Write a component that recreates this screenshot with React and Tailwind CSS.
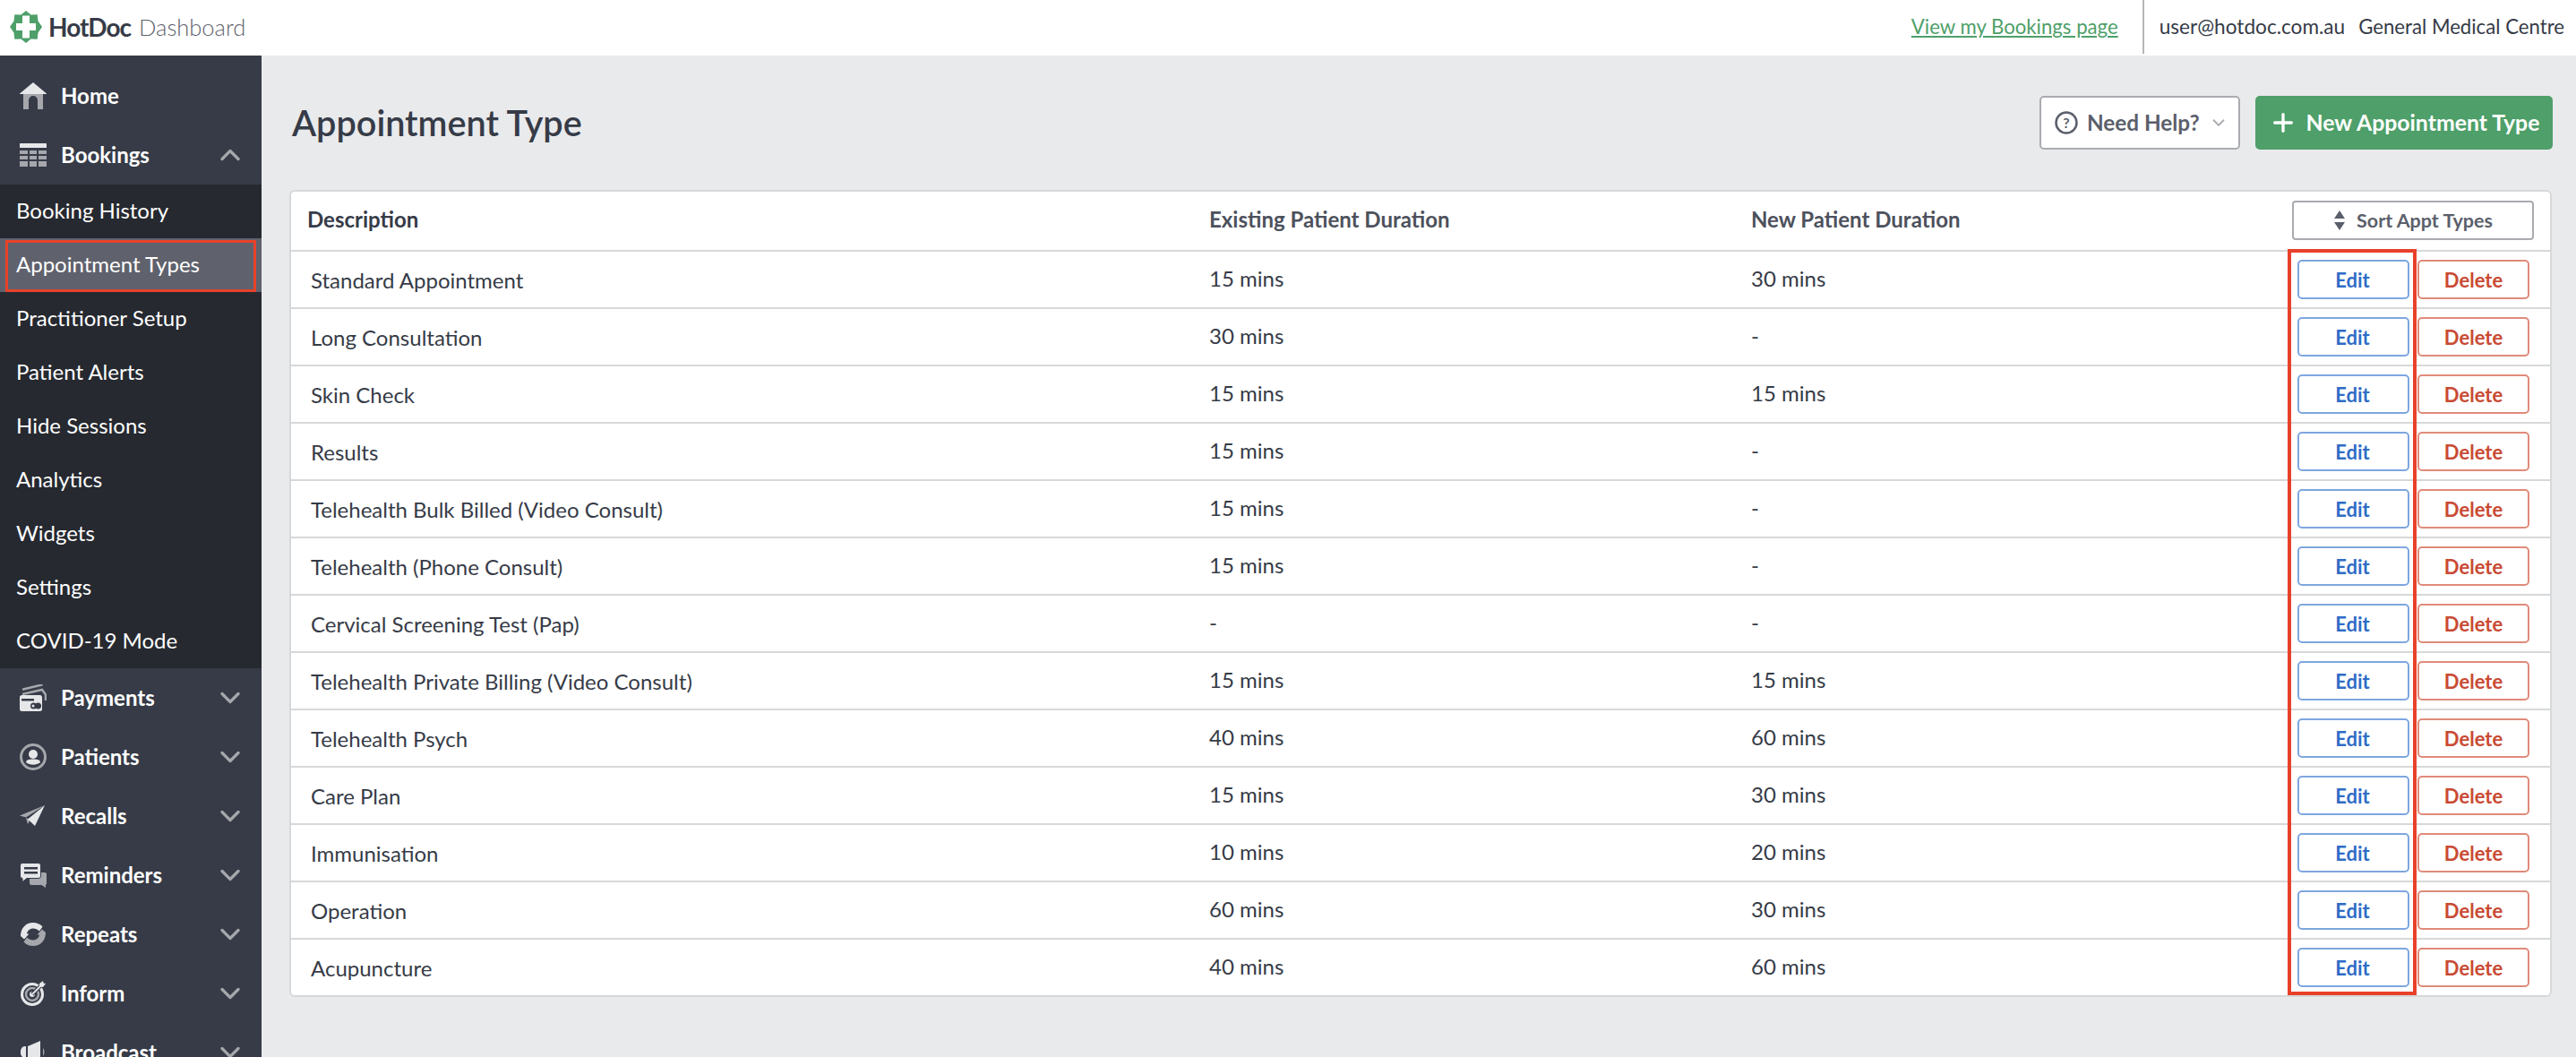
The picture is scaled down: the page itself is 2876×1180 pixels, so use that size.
import { ChevronDown, ChevronUp, Plus } from "lucide-react";

const subItems = [
  "Booking History",
  "Appointment Types",
  "Practitioner Setup",
  "Patient Alerts",
  "Hide Sessions",
  "Analytics",
  "Widgets",
  "Settings",
  "COVID-19 Mode",
];

const rows = [
  ["Standard Appointment", "15 mins", "30 mins"],
  ["Long Consultation", "30 mins", "-"],
  ["Skin Check", "15 mins", "15 mins"],
  ["Results", "15 mins", "-"],
  ["Telehealth Bulk Billed (Video Consult)", "15 mins", "-"],
  ["Telehealth (Phone Consult)", "15 mins", "-"],
  ["Cervical Screening Test (Pap)", "-", "-"],
  ["Telehealth Private Billing (Video Consult)", "15 mins", "15 mins"],
  ["Telehealth Psych", "40 mins", "60 mins"],
  ["Care Plan", "15 mins", "30 mins"],
  ["Immunisation", "10 mins", "20 mins"],
  ["Operation", "60 mins", "30 mins"],
  ["Acupuncture", "40 mins", "60 mins"],
];

const LIGHT = "#e6e7e9";
const MID = "#a5a7ac";

function Logo() {
  return (
    <svg width="36" height="36" viewBox="0 0 36 36">
      <path
        fill="#4e9f69"
        d="M18 0l5.600 4.500 7.100-.2.8 7.100L36 18l-4.500 6.600-.8 7.100-7.100-.2L18 36l-5.600-4.500-7.100.2-.8-7.100L0 18l4.500-6.600.8-7.100 7.100.2z"
      />
      <path fill="#fff" d="M14 5.500h8V14h7v8h-7v8.500h-8V22H7v-8h7z" />
    </svg>
  );
}

function HomeIcon() {
  return (
    <svg width="30" height="30" viewBox="0 0 30 30">
      <path fill={LIGHT} d="M15 0L30 12.500V13H0v-.5z" />
      <path fill={MID} d="M4 13h22v17h-6V20a5 5 0 0 0-10 0v10H4z" />
    </svg>
  );
}

function BookingsIcon() {
  return (
    <svg width="30" height="26" viewBox="0 0 30 26">
      <rect width="30" height="5" rx="0.500" fill={LIGHT} />
      {[8, 14, 20].map((y) =>
        [0, 11, 21].map((x) => (
          <rect key={`${x}-${y}`} x={x} y={y} width={x === 11 ? 8 : 9} height={y === 20 ? 6 : 4} fill={MID} />
        ))
      )}
    </svg>
  );
}

function PaymentsIcon() {
  return (
    <svg width="30" height="30" viewBox="0 0 30 30">
      <path d="M4 5.500L24.500 0.500" stroke={MID} strokeWidth="2.500" strokeLinecap="round" fill="none" />
      <path d="M3 11L25 6l4 5.500V18" stroke={MID} strokeWidth="2.500" fill="none" />
      <rect x="0" y="12" width="25" height="18" rx="2.500" fill={LIGHT} />
      <rect x="2" y="16" width="14" height="2.500" fill="#363b47" />
      <circle cx="15.500" cy="24" r="3.500" fill="#363b47" />
      <circle cx="20.500" cy="24" r="3.500" fill="#363b47" />
      <circle cx="15" cy="24" r="1.500" fill={LIGHT} />
    </svg>
  );
}

function PatientsIcon() {
  return (
    <svg width="30" height="30" viewBox="0 0 30 30">
      <circle cx="15" cy="15" r="13.500" fill="none" stroke={MID} strokeWidth="3" />
      <circle cx="15" cy="12" r="5" fill={LIGHT} />
      <path fill={LIGHT} d="M7 21c0-2.500 3-3.500 8-3.500s8 1 8 3.500c-2 1.800-5 2.800-8 2.800s-6-1-8-2.800z" />
    </svg>
  );
}

function RecallsIcon() {
  return (
    <svg width="30" height="24" viewBox="0 0 30 24">
      <path fill={MID} d="M0 11.500L28 0 7 13.500z" />
      <path fill={MID} d="M7 14l2 7 3-5z" />
      <path fill={LIGHT} d="M28 0L17 23l-8-7.500z" />
    </svg>
  );
}

function RemindersIcon() {
  return (
    <svg width="30" height="28" viewBox="0 0 30 28">
      <path
        fill={MID}
        d="M13 11h15a2 2 0 0 1 2 2v10a2 2 0 0 1-1 1.700V28l-4.500-3H13a2 2 0 0 1-2-2V13a2 2 0 0 1 2-2z"
      />
      <path
        fill={LIGHT}
        stroke="#363b47"
        strokeWidth="1"
        d="M3 .5h18a2.500 2.500 0 0 1 2.500 2.500v12a2.500 2.500 0 0 1-2.500 2.500H8l-5 4v-4a2.500 2.500 0 0 1-2.500-2.500V3A2.500 2.500 0 0 1 3 .5z"
      />
      <rect x="5" y="5" width="15" height="2.500" fill="#363b47" />
      <rect x="5" y="10" width="15" height="2.500" fill="#363b47" />
    </svg>
  );
}

function RepeatsIcon() {
  return (
    <svg width="28" height="26" viewBox="0 0 28 26">
      <path fill={LIGHT} d="M0 15C0 6 6 0 14 0c4 0 8 1.500 10.500 4.500L21 9.500c-2-2-4.500-3-7-3-3.500 0-6.500 2.500-7 6l2.500 0L4 18.500z" />
      <path fill={MID} d="M28 11c0 9-6 15-14 15-4 0-8-1.500-10.500-4.500L7 16.500c2 2 4.500 3 7 3 3.500 0 6.500-2.500 7-6l-2.500 0L24 7.500z" />
    </svg>
  );
}

function InformIcon() {
  return (
    <svg width="28" height="28" viewBox="0 0 28 28">
      <circle cx="13" cy="15" r="11.500" fill="none" stroke={LIGHT} strokeWidth="3" />
      <circle cx="13" cy="15" r="7" fill="none" stroke={MID} strokeWidth="2.500" />
      <circle cx="13" cy="15" r="3" fill={LIGHT} />
      <path d="M13 15L24 4" stroke="#363b47" strokeWidth="4" />
      <path d="M13 15L24 4" stroke={LIGHT} strokeWidth="1.800" />
      <path fill={LIGHT} d="M21 3l4-3 .5 2.500L28 3l-3 4-4-.5z" />
    </svg>
  );
}

function BroadcastIcon() {
  return (
    <svg width="28" height="28" viewBox="0 0 28 28">
      <path fill={LIGHT} d="M2 8a6 6 0 0 1 4-1v13a6 6 0 0 1-4-1 8 8 0 0 1 0-11z" />
      <path fill={LIGHT} d="M8 7l14-6v26L8 20z" />
      <path fill={MID} d="M25 9c2 2.500 2 6.500 0 9z" />
    </svg>
  );
}

function NavItem({ icon, label, open }) {
  return (
    <div className="flex h-[66px] shrink-0 items-center pl-[22px] pr-[17px]">
      <span className="flex w-[30px] shrink-0 justify-center">{icon}</span>
      <span className="ml-[16px] flex-1 text-[24px] font-bold text-white">{label}</span>
      {open ? (
        <ChevronUp size={36} strokeWidth={2.200} className="text-[#a5a7ac]" />
      ) : (
        <ChevronDown size={36} strokeWidth={2.200} className="text-[#a5a7ac]" />
      )}
    </div>
  );
}

function Sidebar() {
  return (
    <aside className="flex h-[1118px] w-[292px] shrink-0 flex-col overflow-hidden bg-[#363b47] pt-[12px]">
      <div className="flex h-[66px] shrink-0 items-center pl-[22px]">
        <HomeIcon />
        <span className="ml-[16px] text-[24px] font-bold text-white">Home</span>
      </div>
      <NavItem icon={<BookingsIcon />} label="Bookings" open />
      <div className="shrink-0 bg-[#262930]">
        {subItems.map((item) => (
          <div
            key={item}
            className={
              item === "Appointment Types"
                ? "relative flex h-[60px] items-center bg-[#5f626d] pb-[2px] pl-[18px] text-[24px] text-white"
                : "flex h-[60px] items-center pb-[2px] pl-[18px] text-[24px] text-white"
            }
          >
            {item}
            {item === "Appointment Types" && (
              <span className="absolute left-[6px] top-[2px] h-[58px] w-[280px] border-[3px] border-[#e8412a]" />
            )}
          </div>
        ))}
      </div>
      <NavItem icon={<PaymentsIcon />} label="Payments" />
      <NavItem icon={<PatientsIcon />} label="Patients" />
      <NavItem icon={<RecallsIcon />} label="Recalls" />
      <NavItem icon={<RemindersIcon />} label="Reminders" />
      <NavItem icon={<RepeatsIcon />} label="Repeats" />
      <NavItem icon={<InformIcon />} label="Inform" />
      <NavItem icon={<BroadcastIcon />} label="Broadcast" />
    </aside>
  );
}

export default function App() {
  return (
    <div className="flex h-[1180px] w-[2876px] flex-col overflow-hidden bg-[#e9eaec] font-['Lato',sans-serif] text-[#363b47]">
      <header className="flex h-[62px] shrink-0 items-center bg-white pb-[2px] pl-[11px] pr-[13px]">
        <Logo />
        <span className="ml-[7px] text-[28px] font-bold tracking-[-1px]">HotDoc</span>
        <span className="ml-[9px] text-[25.500px] font-light text-[#5f626d]">Dashboard</span>
        <a className="ml-auto text-[22.200px] text-[#4e9f69] underline">View my Bookings page</a>
        <span className="ml-[27px] h-[60px] self-start border-l-2 border-[#b5b7ba]" />
        <span className="ml-[17px] text-[22.600px]">user@hotdoc.com.au</span>
        <span className="ml-[15px] text-[22.200px]">General Medical Centre</span>
      </header>

      <div className="flex min-h-0 flex-1">
        <Sidebar />

        <main className="relative flex-1 pl-[31px] pr-[26px]">
          <div className="flex h-[150px] items-center justify-between">
            <h2 className="ml-[3px] text-[39.600px] font-semibold leading-none">Appointment Type</h2>
            <div className="flex gap-[17px]">
              <button className="flex h-[60px] w-[224px] items-center rounded-[5px] border-2 border-[#a9abb0] bg-white pl-[15px] text-[24.300px] font-bold text-[#5b5f6b]">
                <svg width="26" height="26" viewBox="0 0 26 26" className="mr-[10px]">
                  <circle cx="13" cy="13" r="11.500" fill="none" stroke="#5b5f6b" strokeWidth="2.500" />
                  <text x="13" y="19" textAnchor="middle" fontSize="16" fontWeight="700" fill="#5b5f6b">?</text>
                </svg>
                Need Help?
                <ChevronDown size={22} strokeWidth={2} className="ml-[10px] text-[#a9abb0]" />
              </button>
              <button className="flex h-[60px] w-[332px] items-center justify-center rounded-[5px] bg-[#4e9f69] text-[24.800px] font-bold text-white">
                <Plus size={32} strokeWidth={2.500} className="mr-[10px]" />
                New Appointment Type
              </button>
            </div>
          </div>

          <div className="relative w-[2526px] overflow-hidden rounded-[6px] border-2 border-[#d6d8da] bg-white">
            <div className="grid h-[67px] grid-cols-[1025px_605px_1fr] items-center border-b-2 border-[#d6d8da] pl-[18px] text-[24px] font-bold">
              <span className="mb-[3px]">Description</span>
              <span className="mb-[3px] ml-[-18px] text-[#4d515c]">Existing Patient Duration</span>
              <div className="flex items-center justify-between">
                <span className="mb-[3px] ml-[-18px] text-[#4d515c]">New Patient Duration</span>
                <button className="mb-[1px] mr-[18px] flex h-[44px] w-[270px] items-center justify-center rounded-[4px] border-2 border-[#a9abb0] bg-white text-[21.500px] text-[#5b5f6b]">
                  <svg width="14" height="24" viewBox="0 0 14 24" className="mr-[12px]">
                    <path fill="#5b5f6b" d="M7 1l6 9H1zM7 23l-6-9h12z" />
                  </svg>
                  Sort Appt Types
                </button>
              </div>
            </div>
            {rows.map(([name, existing, patient], i) => (
              <div
                key={name}
                className={
                  i === rows.length - 1
                    ? "grid h-[62px] grid-cols-[1025px_605px_1fr] items-center pl-[22px] text-[24px]"
                    : "grid h-[64px] grid-cols-[1025px_605px_1fr] items-center border-b-2 border-[#d6d8da] pl-[22px] text-[24px]"
                }
              >
                <span className="mt-[1px]">{name}</span>
                <span className="mb-[2px] ml-[-22px]">{existing}</span>
                <div className="flex items-center justify-between">
                  <span className="mb-[2px] ml-[-22px]">{patient}</span>
                  <div className="mr-[23px] flex gap-[9px]">
                    <button className="h-[44px] w-[125px] rounded-[5px] border-2 border-[#7ea6e0] bg-white pr-[2px] text-[22px] font-bold text-[#2f6cc6]">
                      Edit
                    </button>
                    <button className="h-[44px] w-[125px] rounded-[5px] border-2 border-[#e08a7a] bg-white text-[22px] font-bold text-[#c94a33]">
                      Delete
                    </button>
                  </div>
                </div>
              </div>
            ))}
          </div>

          {/* red annotation box around the Edit column */}
          <span className="absolute left-[2262px] top-[216px] h-[833px] w-[144px] border-[4px] border-[#e8412a]" />
        </main>
      </div>
    </div>
  );
}
